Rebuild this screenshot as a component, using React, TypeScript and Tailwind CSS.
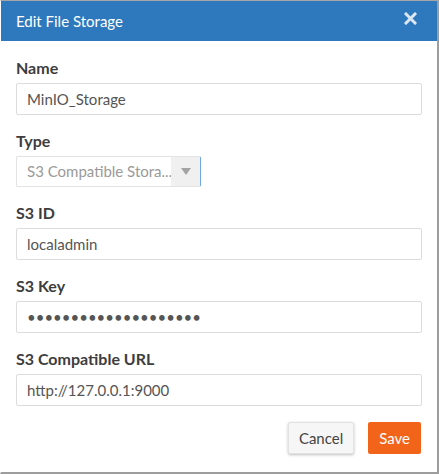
import React from 'react';

const labelCls = 'block text-[16px] font-bold text-[#3d3d3d] leading-[20px] mb-[5px]';
const inputCls =
  'block w-full h-[32px] border border-[#dcdcdc] rounded-[2px] px-[10px] text-[15px] text-[#555] bg-white outline-none';

function Field({ label, children }: { label: string; children: React.ReactNode }) {
  return (
    <div className="mb-[16px]">
      <label className={labelCls}>{label}</label>
      {children}
    </div>
  );
}

export default function App() {
  return (
    <div
      className="w-[439px] h-[474px] bg-white border-t border-t-[#a6a6a6] border-r-2 border-r-[#9d9d9d] border-b-2 border-b-[#9d9d9d] border-l border-l-white flex flex-col"
      style={{ fontFamily: 'Lato, "Open Sans", sans-serif' }}
    >
      <div className="h-10 bg-[#2e78bd] flex items-center justify-between pl-[15px] pr-[20px]">
        <span className="text-white text-[15px]">Edit File Storage</span>
        <svg width="13" height="13" viewBox="0 0 13 13" className="mt-[-6px]">
          <path d="M2 2 L11 11 M11 2 L2 11" stroke="#dde7f1" strokeWidth="3" strokeLinecap="square" />
        </svg>
      </div>

      <div className="px-[15px] pt-[17px]">
        <Field label="Name">
          <input className={inputCls} readOnly defaultValue="MinIO_Storage" />
        </Field>

        <Field label="Type">
          <div className="w-[185px] h-[31px] flex border border-[#e3e3e3] border-r-[#6fa8dc] rounded-[2px]">
            <div className="flex-1 min-w-0 pl-[10px] flex items-center text-[15px] text-[#9a9a9a] whitespace-nowrap overflow-hidden">
              S3 Compatible Stora...
            </div>
            <div className="w-[29px] shrink-0 bg-[#f0f0f0] flex items-center justify-center">
              <svg width="10" height="7" viewBox="0 0 10 7">
                <path d="M0 0 H10 L5 7 Z" fill="#a3a3a3" />
              </svg>
            </div>
          </div>
        </Field>

        <Field label="S3 ID">
          <input className={inputCls} readOnly defaultValue="localadmin" />
        </Field>

        <Field label="S3 Key">
          <input className={inputCls} type="password" readOnly defaultValue="aaaaaaaaaaaaaaaaaaaa" />
        </Field>

        <Field label="S3 Compatible URL">
          <input className={inputCls} readOnly defaultValue="http://127.0.0.1:9000" />
        </Field>

        <div className="flex justify-end gap-[14px] pr-[1px]">
          <button className="h-[32px] px-[10px] bg-[#f6f6f6] border border-[#e2e2e2] rounded-[2px] text-[15px] text-[#444] shadow-[0_1px_3px_rgba(0,0,0,0.25)]">
            Cancel
          </button>
          <button className="h-[32px] px-[11px] bg-[#f26419] rounded-[2px] text-[15px] text-white">
            Save
          </button>
        </div>
      </div>
    </div>
  );
}
